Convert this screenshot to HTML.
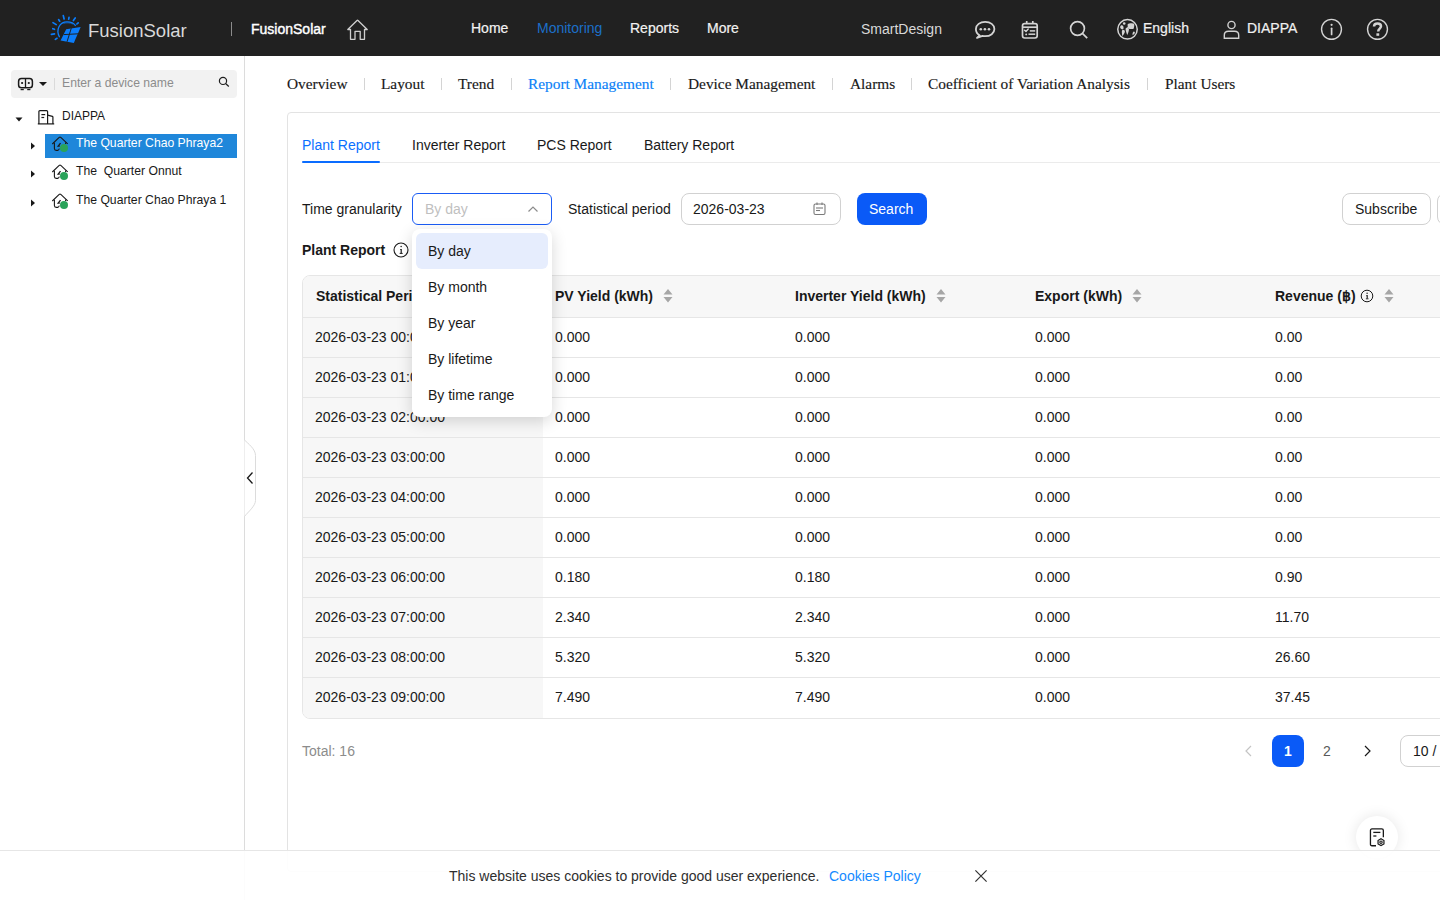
<!DOCTYPE html>
<html><head><meta charset="utf-8">
<style>
*{box-sizing:border-box;margin:0;padding:0}
html,body{width:1440px;height:900px;overflow:hidden;background:#fff;font-family:"Liberation Sans",sans-serif;color:#191919}
.abs{position:absolute}
#hdr{position:absolute;left:0;top:0;width:1440px;height:56px;background:#212121}
.ht{position:absolute;white-space:nowrap;font-size:14px;line-height:16px;color:#f2f2f2}
.bd{-webkit-text-stroke:0.2px currentColor}
#side{position:absolute;left:0;top:56px;width:245px;height:844px;background:#fff;border-right:1px solid #dcdcdc}
.tx{position:absolute;white-space:nowrap;line-height:16px}
.sub{position:absolute;white-space:nowrap;font-family:"Liberation Serif",serif;-webkit-text-stroke:0.15px currentColor;font-size:15.35px;line-height:18px;color:#191919;top:75px}
.sep{position:absolute;width:1px;height:12px;background:#d4d4d4;top:78px}
#card{position:absolute;left:287px;top:112px;width:1200px;height:760px;border:1px solid #e3e3e3;border-radius:4px;background:#fff}
.tab{position:absolute;white-space:nowrap;font-size:14px;line-height:16px;color:#191919;top:137px}
table{border-collapse:collapse}
.th{position:absolute;font-weight:700;font-size:14px;white-space:nowrap;line-height:16px;top:288px}
.sorter{position:absolute;width:10px;height:16px;top:288px}
.row{position:absolute;left:303px;width:1140px;height:40px;border-bottom:1px solid #e6e6e6}
.cell{position:absolute;font-size:14px;white-space:nowrap;line-height:16px;color:#191919}
</style></head>
<body>
<!-- HEADER -->
<div id="hdr">
  <svg class="abs" style="left:46px;top:10px" width="40" height="36" viewBox="0 0 40 36">
    <g stroke="#0b7dfb" stroke-width="1.7" stroke-linecap="round" fill="none">
      <line x1="17.3" y1="5.6" x2="18.1" y2="9"/>
      <line x1="23" y1="7.4" x2="22.7" y2="9.1"/>
      <line x1="29.2" y1="8" x2="27.4" y2="10.5"/>
      <line x1="32.2" y1="12.8" x2="30.9" y2="14"/>
      <line x1="12.6" y1="9.6" x2="13.7" y2="11.2"/>
      <line x1="7" y1="12.6" x2="10.2" y2="14.6"/>
      <line x1="6.8" y1="18.7" x2="8.5" y2="19.3"/>
      <line x1="5.4" y1="24.3" x2="8.5" y2="23.9"/>
      <line x1="9.3" y1="29.4" x2="11" y2="28.3"/>
    </g>
    <path d="M13.6 27.2 C9.5 20 13.5 11.8 21 11.8 C25 11.8 28.3 13.6 29.7 15.8" stroke="#0b7dfb" stroke-width="1.3" fill="none"/>
    <path d="M17.5 13.6 C20 12.6 24 12.6 27 14.2" stroke="#0b7dfb" stroke-width="0.7" fill="none" opacity="0.7"/>
    <path d="M20.2 19.2 L34.7 17.1 L27.8 33 L14.6 30.4 Z" fill="#0b7dfb"/>
    <path d="M17.6 24.6 L32.3 23.8" stroke="#212121" stroke-width="1"/>
    <path d="M25.3 18.2 L21 31.8" stroke="#212121" stroke-width="1"/>
  </svg>
  <div class="ht" style="left:88px;top:21px;font-size:18.5px;line-height:20px;color:#d9d9d9">FusionSolar</div>
  <div class="abs" style="left:231px;top:22px;width:1px;height:14px;background:#8c8c8c"></div>
  <div class="ht bd" style="left:251px;top:21px;font-size:14px;color:#fff;-webkit-text-stroke:0.4px #fff">FusionSolar</div>
  <svg class="abs" style="left:346px;top:19px" width="23" height="22" viewBox="0 0 23 22" fill="none" stroke="#cfcfcf" stroke-width="1.3" stroke-linejoin="round">
    <path d="M1.8 10.5 L11 1.5 Q11.5 1 12 1.5 L21.2 10.5 L18.5 10.5 L18.5 20.3 L14.2 20.3 L14.2 12.3 L9 12.3 L9 20.3 L4.5 20.3 L4.5 10.5 Z"/>
  </svg>
  <div class="ht bd" style="left:471px;top:20px;color:#f2f2f2">Home</div>
  <div class="ht" style="left:537px;top:20px;color:#1c6fc8">Monitoring</div>
  <div class="ht bd" style="left:630px;top:20px">Reports</div>
  <div class="ht bd" style="left:707px;top:20px">More</div>
  <div class="ht" style="left:861px;top:21px;color:#d9d9d9">SmartDesign</div>
  <!-- chat -->
  <svg class="abs" style="left:972px;top:17px" width="26" height="24" viewBox="0 0 26 24" fill="none" stroke="#d4d4d4" stroke-width="1.8">
    <path d="M7.6 18.3 C5 17 3.9 14.6 3.9 12 C3.9 7.8 8 4.9 13.2 4.9 C18.4 4.9 22.4 7.8 22.4 12 C22.4 16.2 18.4 19.2 13.2 19.2 C12.3 19.2 11.3 19.1 10.5 18.9 L5 20.9 Z" stroke-linejoin="round"/>
    <circle cx="8.8" cy="12.3" r="1.3" fill="#d4d4d4" stroke="none"/><circle cx="12.9" cy="12.3" r="1.3" fill="#d4d4d4" stroke="none"/><circle cx="17" cy="12.3" r="1.3" fill="#d4d4d4" stroke="none"/>
  </svg>
  <!-- calendar -->
  <svg class="abs" style="left:1018px;top:17px" width="24" height="24" viewBox="0 0 24 24" fill="none" stroke="#d4d4d4" stroke-width="1.7">
    <rect x="4.5" y="6.6" width="14.7" height="14.4" rx="2.2"/>
    <line x1="4.5" y1="10.2" x2="19.2" y2="10.2"/>
    <line x1="8.7" y1="4" x2="8.7" y2="6.6"/><line x1="14.8" y1="4" x2="14.8" y2="6.6"/>
    <path d="M6.6 13.2 L8 14.4 L10.2 12" stroke-width="1.5" stroke-linejoin="round" stroke-linecap="round"/><line x1="11.8" y1="13.9" x2="17.2" y2="13.9" stroke-width="1.5"/>
    <circle cx="8.2" cy="17.4" r="0.95" fill="#d4d4d4" stroke="none"/><line x1="10.5" y1="17.2" x2="17.2" y2="17.2" stroke-width="1.5"/>
  </svg>
  <!-- search -->
  <svg class="abs" style="left:1068px;top:19px" width="22" height="22" viewBox="0 0 22 22" fill="none" stroke="#d4d4d4" stroke-width="1.7">
    <circle cx="9.5" cy="9.5" r="6.9"/><line x1="14.4" y1="14.4" x2="19.2" y2="19.2"/>
  </svg>
  <!-- globe -->
  <svg class="abs" style="left:1116px;top:18px" width="24" height="24" viewBox="0 0 24 24">
    <circle cx="11.5" cy="11.3" r="9.75" fill="none" stroke="#d4d4d4" stroke-width="1.5"/>
    <g fill="#d4d4d4">
    <ellipse cx="8.2" cy="5.5" rx="1.3" ry="1.2"/>
    <path d="M4.2 8.8 C4.3 7.2 6.2 6.8 7 7.8 C7.6 8.8 7.6 10.2 7.3 11.3 C6.3 11.6 4.8 11 4.3 10 Z"/>
    <path d="M6 12.4 C7 11.8 8.8 12.2 8.9 13.4 C8.8 15 7.4 17.2 6.2 18 C6 16.5 5.7 13.8 6 12.4 Z"/>
    <path d="M9.8 10.2 C10.5 9.4 12.4 9.5 12.9 10.5 C13.2 12 12.2 15.4 11.3 17 C10.6 15.6 9.8 13.2 9.6 11.6 C9.5 11 9.6 10.5 9.8 10.2 Z"/>
    <path d="M10.2 9.6 L12.4 8.6 L12.6 9.9 Z"/>
    <path d="M11.8 6 C13 5 16.8 4.9 18 5.8 C18.6 7 18.2 9.8 17.4 10.9 C16.2 11.4 15 10.8 14.2 11 C13.2 10.8 12.3 10.2 12 9.4 C11.6 8.2 11.5 6.8 11.8 6 Z"/>
    <path d="M17.8 13.4 C18.8 13.6 19.2 14.6 18.6 15.6 L16.8 17.2 C16.1 16.2 16.7 13.8 17.8 13.4 Z"/>
    </g>
  </svg>
  <div class="ht bd" style="left:1143px;top:20px;color:#f0f0f0">English</div>
  <!-- user -->
  <svg class="abs" style="left:1222px;top:18px" width="18" height="21" viewBox="0 0 18 21" fill="none" stroke="#d0d0d0" stroke-width="1.4">
    <circle cx="9.5" cy="7" r="3.6"/><path d="M2.3 20.3 L2.3 17.2 C2.3 14.6 4 13.3 6.5 13.3 L12.5 13.3 C15 13.3 16.7 14.6 16.7 17.2 L16.7 20.3 Z"/>
  </svg>
  <div class="ht bd" style="left:1247px;top:20px;color:#f0f0f0">DIAPPA</div>
  <!-- info -->
  <svg class="abs" style="left:1320px;top:18px" width="23" height="23" viewBox="0 0 23 23" fill="none" stroke="#d4d4d4" stroke-width="1.4">
    <circle cx="11.5" cy="11.35" r="9.95"/><line x1="11.6" y1="10.3" x2="11.6" y2="16.4" stroke-width="1.7" stroke-linecap="round"/><circle cx="11.6" cy="6.8" r="1.1" fill="#d4d4d4" stroke="none"/>
  </svg>
  <!-- help -->
  <svg class="abs" style="left:1366px;top:18px" width="23" height="23" viewBox="0 0 23 23" fill="none" stroke="#d4d4d4" stroke-width="1.4">
    <circle cx="11.5" cy="11.35" r="9.95"/>
    <path d="M8 8.6 C8 6.4 9.6 5.4 11.5 5.4 C13.5 5.4 15 6.5 15 8.3 C15 10.6 12.2 10.6 12.2 13.4" stroke-width="2.5"/>
    <rect x="10.4" y="15.3" width="2.8" height="2.5" fill="#d4d4d4" stroke="none"/>
  </svg>
</div>

<!-- SIDEBAR -->
<div id="side">
  <div class="abs" style="left:11px;top:14px;width:226px;height:28px;background:#f2f2f2;border-radius:4px"></div>
  <svg class="abs" style="left:17px;top:21px" width="18" height="16" viewBox="0 0 18 16" fill="none" stroke="#191919">
    <rect x="1.6" y="1.6" width="13.8" height="9.2" rx="2.8" stroke-width="1.5"/>
    <line x1="8.5" y1="1.6" x2="8.5" y2="10.8" stroke-width="1.3"/>
    <circle cx="5.1" cy="6" r="1.1" fill="#191919" stroke="none"/><circle cx="11.8" cy="6" r="1.1" fill="#191919" stroke="none"/>
    <line x1="3.6" y1="12.6" x2="6.8" y2="12.6" stroke-width="1.2"/><line x1="10.2" y1="12.6" x2="13.4" y2="12.6" stroke-width="1.2"/>
  </svg>
  <svg class="abs" style="left:38px;top:25px" width="10" height="6" viewBox="0 0 10 6"><path d="M1 1 L9 1 L5 5 Z" fill="#191919"/></svg>
  <div class="abs" style="left:54px;top:22px;width:1px;height:12px;background:#dadada"></div>
  <div class="tx" style="left:62px;top:19px;font-size:12.2px;color:#8c8c8c">Enter a device name</div>
  <svg class="abs" style="left:217px;top:20px" width="14" height="14" viewBox="0 0 14 14" fill="none" stroke="#1e1e1e" stroke-width="1.2">
    <circle cx="6" cy="4.9" r="3.6"/><line x1="8.6" y1="7.5" x2="11.8" y2="10.5"/>
  </svg>
  <!-- tree -->
  <svg class="abs" style="left:14px;top:60px" width="10" height="7" viewBox="0 0 10 7"><path d="M1.5 1.5 L8.5 1.5 L5 5.5 Z" fill="#191919"/></svg>
  <svg class="abs" style="left:37px;top:53px" width="18" height="16" viewBox="0 0 18 16" fill="none" stroke="#191919" stroke-width="1.2">
    <path d="M0.8 14.9 L17.2 14.9"/><path d="M1.9 14.9 L1.9 2.6 Q1.9 1.6 2.9 1.6 L9.6 1.6 Q10.6 1.6 10.6 2.6 L10.6 14.9"/><path d="M10.6 6.2 L15.4 7.4 Q15.9 7.6 15.9 8.1 L15.9 14.9"/>
    <line x1="4.4" y1="5.6" x2="8.2" y2="5.6"/><line x1="4.4" y1="8.5" x2="7.2" y2="8.5"/>
  </svg>
  <div class="tx" style="left:62px;top:52px;font-size:12px;color:#191919">DIAPPA</div>
  <div class="abs" style="left:45px;top:78px;width:192px;height:24px;background:#1f87da"></div>
  <svg class="abs" style="left:30px;top:85px" width="7" height="10" viewBox="0 0 7 10"><path d="M1 1.5 L5 5 L1 8.5 Z" fill="#191919"/></svg>
  <svg class="abs" style="left:30px;top:113px" width="7" height="10" viewBox="0 0 7 10"><path d="M1 1.5 L5 5 L1 8.5 Z" fill="#191919"/></svg>
  <svg class="abs" style="left:30px;top:142px" width="7" height="10" viewBox="0 0 7 10"><path d="M1 1.5 L5 5 L1 8.5 Z" fill="#191919"/></svg>
  <svg class="abs" style="left:51px;top:80px" width="18" height="18" viewBox="0 0 18 18" fill="none" stroke="#191919" stroke-width="1.1">
    <path d="M1.3 8 L8.2 1.4 Q9 0.8 9.8 1.4 L16.7 7.8"/><path d="M3.4 6.7 L3.4 12.6 Q3.4 14.4 5.2 14.4 L6.8 14.4 Q7.6 14.4 8.4 12.6"/><path d="M14.6 6.6 L14.6 8"/><path d="M9.5 7.2 L7.2 10.1 L8.8 10.1" stroke-width="1.3"/>
    <circle cx="13" cy="12" r="4" fill="#2aa35a" stroke="none"/></svg>
<svg class="abs" style="left:51px;top:108px" width="18" height="18" viewBox="0 0 18 18" fill="none" stroke="#191919" stroke-width="1.1">
    <path d="M1.3 8 L8.2 1.4 Q9 0.8 9.8 1.4 L16.7 7.8"/><path d="M3.4 6.7 L3.4 12.6 Q3.4 14.4 5.2 14.4 L6.8 14.4 Q7.6 14.4 8.4 12.6"/><path d="M14.6 6.6 L14.6 8"/><path d="M9.5 7.2 L7.2 10.1 L8.8 10.1" stroke-width="1.3"/>
    <circle cx="13" cy="12" r="4" fill="#2aa35a" stroke="none"/></svg>
<svg class="abs" style="left:51px;top:137px" width="18" height="18" viewBox="0 0 18 18" fill="none" stroke="#191919" stroke-width="1.1">
    <path d="M1.3 8 L8.2 1.4 Q9 0.8 9.8 1.4 L16.7 7.8"/><path d="M3.4 6.7 L3.4 12.6 Q3.4 14.4 5.2 14.4 L6.8 14.4 Q7.6 14.4 8.4 12.6"/><path d="M14.6 6.6 L14.6 8"/><path d="M9.5 7.2 L7.2 10.1 L8.8 10.1" stroke-width="1.3"/>
    <circle cx="13" cy="12" r="4" fill="#2aa35a" stroke="none"/></svg>

  <div class="tx" style="left:76px;top:79px;font-size:12.2px;color:#fff">The Quarter Chao Phraya2</div>
  <div class="tx" style="left:76px;top:107px;font-size:12.2px;color:#191919">The&nbsp; Quarter Onnut</div>
  <div class="tx" style="left:76px;top:136px;font-size:12.2px;color:#191919">The Quarter Chao Phraya 1</div>
  <!-- collapse handle -->
  <svg class="abs" style="left:244px;top:383px" width="14" height="80" viewBox="0 0 14 80" fill="#fff" stroke="#dcdcdc" stroke-width="1">
    <path d="M0.5 1 C4 4.5 11.5 10 11.5 16.5 L11.5 61.5 C11.5 67 4 73 0.5 77.5"/>
  </svg>
  <svg class="abs" style="left:246px;top:415px" width="8" height="14" viewBox="0 0 8 14" fill="none" stroke="#191919" stroke-width="1.3"><path d="M6.5 1.5 L1.5 7 L6.5 12.5"/></svg>
</div>


<!-- SUBNAV -->
<div class="sub" style="left:287px">Overview</div>
<div class="sep" style="left:364px"></div>
<div class="sub" style="left:381px">Layout</div>
<div class="sep" style="left:441px"></div>
<div class="sub" style="left:458px">Trend</div>
<div class="sep" style="left:511px"></div>
<div class="sub" style="left:528px;color:#0a80f7">Report Management</div>
<div class="sep" style="left:670px"></div>
<div class="sub" style="left:688px">Device Management</div>
<div class="sep" style="left:832px"></div>
<div class="sub" style="left:850px">Alarms</div>
<div class="sep" style="left:911px"></div>
<div class="sub" style="left:928px">Coefficient of Variation Analysis</div>
<div class="sep" style="left:1147px"></div>
<div class="sub" style="left:1165px">Plant Users</div>

<!-- CARD -->
<div id="card"></div>
<div class="tab" style="left:302px;color:#0a70ff">Plant Report</div>
<div class="tab" style="left:412px">Inverter Report</div>
<div class="tab" style="left:537px">PCS Report</div>
<div class="tab" style="left:644px">Battery Report</div>
<div class="abs" style="left:302px;top:162px;width:1138px;height:1px;background:#ebebeb"></div>
<div class="abs" style="left:302px;top:161px;width:78px;height:2px;background:#0a6cff;border-radius:1px"></div>

<!-- FILTERS -->
<div class="tx" style="left:302px;top:201px;font-size:14px">Time granularity</div>
<div class="abs" style="left:412px;top:193px;width:140px;height:32px;border:1px solid #1a5cf5;border-radius:6px;background:#fff"></div>
<div class="tx" style="left:425px;top:201px;font-size:14px;color:#bfbfbf">By day</div>
<svg class="abs" style="left:527px;top:204px" width="12" height="10" viewBox="0 0 12 10" fill="none" stroke="#8c8c8c" stroke-width="1.2"><path d="M1.5 7.5 L6 3 L10.5 7.5"/></svg>
<div class="tx" style="left:568px;top:201px;font-size:14px">Statistical period</div>
<div class="abs" style="left:681px;top:193px;width:160px;height:32px;border:1px solid #d1d1d1;border-radius:8px;background:#fff"></div>
<div class="tx" style="left:693px;top:201px;font-size:14px">2026-03-23</div>
<svg class="abs" style="left:812px;top:201px" width="15" height="15" viewBox="0 0 15 15" fill="none" stroke="#7a7a7a" stroke-width="1.1">
  <rect x="2" y="3" width="11" height="10.5" rx="1.5"/><line x1="5" y1="1.5" x2="5" y2="4"/><line x1="10" y1="1.5" x2="10" y2="4"/>
  <line x1="4" y1="7" x2="11" y2="7"/><line x1="4" y1="9.5" x2="8" y2="9.5"/>
</svg>
<div class="abs" style="left:857px;top:193px;width:70px;height:32px;background:#0a5af7;border-radius:8px"></div>
<div class="tx" style="left:869px;top:201px;font-size:14px;color:#fff">Search</div>
<div class="abs" style="left:1342px;top:193px;width:89px;height:32px;border:1px solid #d1d1d1;border-radius:8px;background:#fff"></div>
<div class="tx" style="left:1355px;top:201px;font-size:14px">Subscribe</div>
<div class="abs" style="left:1437px;top:193px;width:20px;height:32px;border:1px solid #d1d1d1;border-radius:8px;background:#fff"></div>

<div class="tx" style="left:302px;top:242px;font-size:14px;font-weight:700">Plant Report</div>
<svg class="abs" style="left:393px;top:242px" width="16" height="16" viewBox="0 0 16 16" fill="none" stroke="#191919" stroke-width="1.1">
  <circle cx="8" cy="8" r="7"/><path d="M7.2 7.5 L8.2 7.5 L8.2 11.2" stroke-width="1.2"/><line x1="6.7" y1="11.4" x2="9.7" y2="11.4" stroke-width="1"/><circle cx="8.1" cy="4.6" r="0.75" fill="#191919" stroke="none"/>
</svg>

<!-- TABLE -->
<div class="abs" style="left:302px;top:275px;width:1200px;height:444px;border:1px solid #e6e6e6;border-radius:8px;overflow:hidden;background:#fff">
<div class="abs" style="left:0;top:0;width:1200px;height:42px;background:#f7f7f7;border-bottom:1px solid #e6e6e6"></div>
<div class="abs" style="left:0;top:42px;width:240px;height:402px;background:#f7f7f7"></div>
<div class="tx" style="left:13px;top:12px;font-size:14px;font-weight:700">Statistical Period</div>
<div class="tx" style="left:252px;top:12px;font-size:14px;font-weight:700">PV Yield (kWh)</div>
<svg class="abs" style="left:360px;top:12px" width="10" height="16" viewBox="0 0 10 16"><path d="M5 1 L9.5 6.5 L0.5 6.5 Z M0.5 9 L9.5 9 L5 14.5 Z" fill="#a6a6a6"/></svg>
<div class="tx" style="left:492px;top:12px;font-size:14px;font-weight:700">Inverter Yield (kWh)</div>
<svg class="abs" style="left:633px;top:12px" width="10" height="16" viewBox="0 0 10 16"><path d="M5 1 L9.5 6.5 L0.5 6.5 Z M0.5 9 L9.5 9 L5 14.5 Z" fill="#a6a6a6"/></svg>
<div class="tx" style="left:732px;top:12px;font-size:14px;font-weight:700">Export (kWh)</div>
<svg class="abs" style="left:829px;top:12px" width="10" height="16" viewBox="0 0 10 16"><path d="M5 1 L9.5 6.5 L0.5 6.5 Z M0.5 9 L9.5 9 L5 14.5 Z" fill="#a6a6a6"/></svg>
<div class="tx" style="left:972px;top:12px;font-size:14px;font-weight:700">Revenue (฿)</div>
<svg class="abs" style="left:1081px;top:12px" width="10" height="16" viewBox="0 0 10 16"><path d="M5 1 L9.5 6.5 L0.5 6.5 Z M0.5 9 L9.5 9 L5 14.5 Z" fill="#a6a6a6"/></svg>
<svg class="abs" style="left:1057px;top:13px" width="14" height="14" viewBox="0 0 14 14" fill="none" stroke="#191919" stroke-width="1"><circle cx="7" cy="7" r="5.8"/><path d="M6.3 6.6 L7.2 6.6 L7.2 9.6" stroke-width="1.1"/><line x1="5.9" y1="9.8" x2="8.5" y2="9.8" stroke-width="0.9"/><circle cx="7.1" cy="4.3" r="0.7" fill="#191919" stroke="none"/></svg>
<div class="abs" style="left:0;top:81px;width:1200px;height:1px;background:#e6e6e6"></div>
<div class="tx" style="left:12px;top:53px;font-size:14px">2026-03-23 00:00:00</div>
<div class="tx" style="left:252px;top:53px;font-size:14px">0.000</div>
<div class="tx" style="left:492px;top:53px;font-size:14px">0.000</div>
<div class="tx" style="left:732px;top:53px;font-size:14px">0.000</div>
<div class="tx" style="left:972px;top:53px;font-size:14px">0.00</div>
<div class="abs" style="left:0;top:121px;width:1200px;height:1px;background:#e6e6e6"></div>
<div class="tx" style="left:12px;top:93px;font-size:14px">2026-03-23 01:00:00</div>
<div class="tx" style="left:252px;top:93px;font-size:14px">0.000</div>
<div class="tx" style="left:492px;top:93px;font-size:14px">0.000</div>
<div class="tx" style="left:732px;top:93px;font-size:14px">0.000</div>
<div class="tx" style="left:972px;top:93px;font-size:14px">0.00</div>
<div class="abs" style="left:0;top:161px;width:1200px;height:1px;background:#e6e6e6"></div>
<div class="tx" style="left:12px;top:133px;font-size:14px">2026-03-23 02:00:00</div>
<div class="tx" style="left:252px;top:133px;font-size:14px">0.000</div>
<div class="tx" style="left:492px;top:133px;font-size:14px">0.000</div>
<div class="tx" style="left:732px;top:133px;font-size:14px">0.000</div>
<div class="tx" style="left:972px;top:133px;font-size:14px">0.00</div>
<div class="abs" style="left:0;top:201px;width:1200px;height:1px;background:#e6e6e6"></div>
<div class="tx" style="left:12px;top:173px;font-size:14px">2026-03-23 03:00:00</div>
<div class="tx" style="left:252px;top:173px;font-size:14px">0.000</div>
<div class="tx" style="left:492px;top:173px;font-size:14px">0.000</div>
<div class="tx" style="left:732px;top:173px;font-size:14px">0.000</div>
<div class="tx" style="left:972px;top:173px;font-size:14px">0.00</div>
<div class="abs" style="left:0;top:241px;width:1200px;height:1px;background:#e6e6e6"></div>
<div class="tx" style="left:12px;top:213px;font-size:14px">2026-03-23 04:00:00</div>
<div class="tx" style="left:252px;top:213px;font-size:14px">0.000</div>
<div class="tx" style="left:492px;top:213px;font-size:14px">0.000</div>
<div class="tx" style="left:732px;top:213px;font-size:14px">0.000</div>
<div class="tx" style="left:972px;top:213px;font-size:14px">0.00</div>
<div class="abs" style="left:0;top:281px;width:1200px;height:1px;background:#e6e6e6"></div>
<div class="tx" style="left:12px;top:253px;font-size:14px">2026-03-23 05:00:00</div>
<div class="tx" style="left:252px;top:253px;font-size:14px">0.000</div>
<div class="tx" style="left:492px;top:253px;font-size:14px">0.000</div>
<div class="tx" style="left:732px;top:253px;font-size:14px">0.000</div>
<div class="tx" style="left:972px;top:253px;font-size:14px">0.00</div>
<div class="abs" style="left:0;top:321px;width:1200px;height:1px;background:#e6e6e6"></div>
<div class="tx" style="left:12px;top:293px;font-size:14px">2026-03-23 06:00:00</div>
<div class="tx" style="left:252px;top:293px;font-size:14px">0.180</div>
<div class="tx" style="left:492px;top:293px;font-size:14px">0.180</div>
<div class="tx" style="left:732px;top:293px;font-size:14px">0.000</div>
<div class="tx" style="left:972px;top:293px;font-size:14px">0.90</div>
<div class="abs" style="left:0;top:361px;width:1200px;height:1px;background:#e6e6e6"></div>
<div class="tx" style="left:12px;top:333px;font-size:14px">2026-03-23 07:00:00</div>
<div class="tx" style="left:252px;top:333px;font-size:14px">2.340</div>
<div class="tx" style="left:492px;top:333px;font-size:14px">2.340</div>
<div class="tx" style="left:732px;top:333px;font-size:14px">0.000</div>
<div class="tx" style="left:972px;top:333px;font-size:14px">11.70</div>
<div class="abs" style="left:0;top:401px;width:1200px;height:1px;background:#e6e6e6"></div>
<div class="tx" style="left:12px;top:373px;font-size:14px">2026-03-23 08:00:00</div>
<div class="tx" style="left:252px;top:373px;font-size:14px">5.320</div>
<div class="tx" style="left:492px;top:373px;font-size:14px">5.320</div>
<div class="tx" style="left:732px;top:373px;font-size:14px">0.000</div>
<div class="tx" style="left:972px;top:373px;font-size:14px">26.60</div>
<div class="tx" style="left:12px;top:413px;font-size:14px">2026-03-23 09:00:00</div>
<div class="tx" style="left:252px;top:413px;font-size:14px">7.490</div>
<div class="tx" style="left:492px;top:413px;font-size:14px">7.490</div>
<div class="tx" style="left:732px;top:413px;font-size:14px">0.000</div>
<div class="tx" style="left:972px;top:413px;font-size:14px">37.45</div>

</div>

<div class="tx" style="left:302px;top:743px;font-size:14px;color:#8c8c8c">Total: 16</div>
<svg class="abs" style="left:1242px;top:744px" width="12" height="14" viewBox="0 0 12 14" fill="none" stroke="#c4c4c4" stroke-width="1.2"><path d="M9 2 L4 7 L9 12"/></svg>
<div class="abs" style="left:1272px;top:735px;width:32px;height:32px;background:#0a5af7;border-radius:8px"></div>
<div class="tx" style="left:1272px;top:743px;width:32px;text-align:center;font-size:14px;font-weight:700;color:#fff">1</div>
<div class="tx" style="left:1311px;top:743px;width:32px;text-align:center;font-size:14px;color:#595959">2</div>
<svg class="abs" style="left:1362px;top:744px" width="12" height="14" viewBox="0 0 12 14" fill="none" stroke="#191919" stroke-width="1.2"><path d="M3 2 L8 7 L3 12"/></svg>
<div class="abs" style="left:1400px;top:735px;width:80px;height:32px;border:1px solid #d1d1d1;border-radius:8px;background:#fff"></div>
<div class="tx" style="left:1413px;top:743px;font-size:14px">10 / page</div>

<!-- floating button -->
<div class="abs" style="left:1356px;top:816px;width:42px;height:42px;border-radius:50%;background:#fff;box-shadow:0 0 14px rgba(0,0,0,0.10)"></div>
<svg class="abs" style="left:1367px;top:826px" width="20" height="22" viewBox="0 0 20 22" fill="none" stroke="#191919" stroke-width="1.3">
  <path d="M9 19.75 L5 19.75 Q3.45 19.75 3.45 18.2 L3.45 4.5 Q3.45 2.95 5 2.95 L14.8 2.95 Q16.35 2.95 16.35 4.5 L16.35 11.2"/>
  <line x1="6.3" y1="6.4" x2="13.4" y2="6.4"/><line x1="6.3" y1="10" x2="9.4" y2="10"/>
  <path d="M14 12.8 L16.95 14.5 L16.95 17.9 L14 19.6 L11.05 17.9 L11.05 14.5 Z" stroke-width="1.2"/><circle cx="14" cy="16.2" r="1.2" stroke-width="1.1"/>
</svg>

<!-- DROPDOWN -->
<div class="abs" style="left:412px;top:229px;width:140px;height:188px;background:#fff;border-radius:8px;box-shadow:0 4px 16px rgba(0,0,0,0.16)"></div>
<div class="abs" style="left:416px;top:233px;width:132px;height:36px;background:#e6edfd;border-radius:6px"></div>
<div class="tx" style="left:428px;top:243px;font-size:14px">By day</div>
<div class="tx" style="left:428px;top:279px;font-size:14px">By month</div>
<div class="tx" style="left:428px;top:315px;font-size:14px">By year</div>
<div class="tx" style="left:428px;top:351px;font-size:14px">By lifetime</div>
<div class="tx" style="left:428px;top:387px;font-size:14px">By time range</div>

<!-- COOKIE BANNER -->
<div class="abs" style="left:0;top:850px;width:1440px;height:50px;background:rgba(255,255,255,0.9);border-top:1px solid #e6e6e6"></div>
<div class="tx" style="left:449px;top:868px;font-size:14px;color:#2e2e2e">This website uses cookies to provide good user experience.</div>
<div class="tx" style="left:829px;top:868px;font-size:14px;color:#148aff">Cookies Policy</div>
<svg class="abs" style="left:973px;top:868px" width="16" height="16" viewBox="0 0 16 16" fill="none" stroke="#333" stroke-width="1.2"><path d="M2.4 2.4 L13.6 13.6 M13.6 2.4 L2.4 13.6"/></svg>

</body></html>
